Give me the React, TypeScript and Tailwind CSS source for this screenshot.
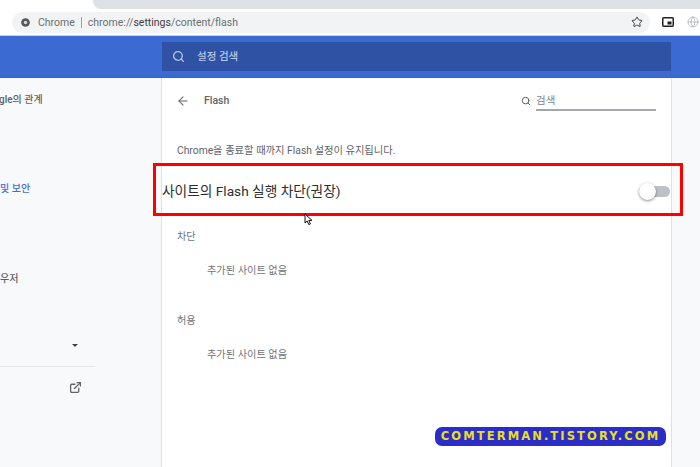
import { ArrowLeft, Search, Star, ExternalLink, Globe } from "lucide-react";

const font = { fontFamily: '"Roboto", "Noto Sans CJK KR", sans-serif' };

const App = () => {
  return (
    <div className="relative w-[700px] h-[467px] overflow-hidden bg-[#f8f9fa] flex flex-col" style={font}>
      {/* Tab strip */}
      <div className="h-[9px] bg-white flex pl-[93px] shrink-0">
        <div className="flex-1 bg-[#dee1e6] rounded-bl-lg" />
      </div>

      {/* Toolbar */}
      <div className="h-[27px] bg-white flex items-center pl-3 shrink-0 border-b border-[#c6d3e8]">
        <div className="flex-1 h-[21px] bg-[#f1f3f4] rounded-full flex items-center pl-[9px] pr-[7px]">
          <svg width="9" height="9" viewBox="0 0 10 10" className="shrink-0">
            <circle cx="5" cy="5" r="4.8" fill="#54575b" />
            <circle cx="5" cy="5" r="1.9" fill="#d5d7da" />
          </svg>
          <span className="ml-[8px] pt-[1px] text-[10.5px] text-[#6b6f73]">Chrome</span>
          <span className="ml-[6px] w-px h-[11px] bg-[#9aa0a6]" />
          <span className="ml-[6px] pt-[1px] text-[10.5px] text-[#6b6f73]">
            chrome://<span className="text-[#3c4043]">settings</span>/content/flash
          </span>
          <Star size={12} strokeWidth={2} className="ml-auto text-[#3c4043]" />
        </div>
        <div className="w-[50px] flex items-center shrink-0 pl-[12px] gap-[13px]">
          <svg width="12" height="10" viewBox="0 0 12 10" className="shrink-0">
            <rect x="0.75" y="0.75" width="10.5" height="8.5" rx="1" fill="none" stroke="#202124" strokeWidth="1.5" />
            <rect x="5.5" y="4.5" width="4" height="3" fill="#202124" />
          </svg>
          <Globe size={12} strokeWidth={1.5} className="text-[#a9adb1]" />
        </div>
      </div>

      {/* Blue header */}
      <div className="h-[42px] bg-[#3b6ad3] flex items-start pt-[6px] pl-[162px] pr-[29px] shrink-0 border-b border-[#2f62d0]">
        <div className="w-full h-[29px] bg-[#2f52a5] flex items-center pl-[10px] text-[#b9c8e8]">
          <Search size={13} strokeWidth={2.4} />
          <span className="ml-[12px] pt-[1px] text-[10.5px] font-medium">설정 검색</span>
        </div>
      </div>

      {/* Body */}
      <div className="flex flex-1 min-h-0">
        {/* Left menu, cut off by the window */}
        <div className="w-[161px] shrink-0 flex flex-col overflow-hidden">
          <div className="w-[95px] flex flex-col text-[10px] text-[#5f6368]">
            <div className="mt-[15px] h-[14px] leading-[14px] font-medium whitespace-nowrap -ml-[1px]">gle의 관계</div>
            <div className="mt-[75px] h-[14px] leading-[14px] font-medium text-[#3f6fd6] whitespace-nowrap">및 보안</div>
            <div className="mt-[76px] h-[14px] leading-[14px] font-medium whitespace-nowrap">우저</div>
            <div className="mt-[52px] h-[14px] flex items-center pl-[72px]">
              <div className="w-0 h-0 border-x-[3px] border-x-transparent border-t-[3px] border-t-[#3c4043]" />
            </div>
            <div className="mt-[14px] h-px bg-[#e8e9eb]" />
            <div className="mt-[14px] pl-[69px]">
              <ExternalLink size={13} strokeWidth={2.4} className="text-[#5f6368]" />
            </div>
          </div>
        </div>

        {/* Settings card */}
        <div className="w-[511px] shrink-0 bg-white border-x border-[#dfe1e5] flex flex-col">
          <div className="h-[42px] pt-[4px] flex items-center pl-[14px] pr-[15px]">
            <ArrowLeft size={14} strokeWidth={1.8} className="text-[#5f6368]" />
            <span className="ml-[14px] text-[10.5px] font-medium text-[#5f6368]">Flash</span>
            <div className="ml-auto flex items-center">
              <Search size={10} strokeWidth={2.4} className="text-[#5f6368]" />
              <div className="ml-[5px] w-[120px] h-[19px] pt-[2px] border-b-2 border-[#a5a7aa] text-[10.5px] leading-[14px] text-[#80868b]">
                검색
              </div>
            </div>
          </div>

          <p className="mt-[23px] pl-[15px] h-[16px] text-[10.3px] leading-[16px] text-[#5f6368]">
            Chrome을 종료할 때까지 Flash 설정이 유지됩니다.
          </p>

          <div className="mt-[10px] h-[44px] flex items-center justify-between pr-[1px]">
            <span className="text-[13.7px] text-[#2b2d30]">사이트의 Flash 실행 차단(권장)</span>
            <div className="relative w-[31px] h-[11px] rounded-full bg-[#bdc1c6] flex items-center">
              <div className="w-[17px] h-[17px] rounded-full bg-white shadow-[0_1px_3px_rgba(0,0,0,0.45)]" />
            </div>
          </div>

          <div className="mt-[17px] pl-[15px] h-[14px] text-[10.2px] leading-[14px] text-[#6f7377]">차단</div>
          <div className="mt-[20px] pl-[45px] h-[14px] text-[10.2px] leading-[14px] text-[#6f7377]">추가된 사이트 없음</div>
          <div className="mt-[36px] pl-[15px] h-[14px] text-[10.2px] leading-[14px] text-[#6f7377]">허용</div>
          <div className="mt-[20px] pl-[45px] h-[14px] text-[10.2px] leading-[14px] text-[#6f7377]">추가된 사이트 없음</div>
        </div>
      </div>

      {/* Red highlight drawn over the screenshot */}
      <div className="absolute left-[153px] top-[163px] w-[530px] h-[53px] border-[3px] border-[#ff0000]" />

      {/* Mouse cursor */}
      <svg className="absolute left-[304px] top-[213px]" width="11" height="13" viewBox="0 0 11 13">
        <path d="M1 1v9l2.2-2 1.6 3.6 1.6-.7L4.8 7.4H8z" fill="#fff" stroke="#111" strokeWidth="1" />
      </svg>

      {/* Watermark */}
      <div className="absolute left-[435px] top-[427px] w-[231px] h-[19px] rounded-[7px] bg-[#2c2cc8] flex items-center justify-center">
        <span
          className="text-[11.5px] font-bold tracking-[2.1px] text-[#e8e020] whitespace-nowrap"
          style={{ fontFamily: '"DejaVu Sans", sans-serif' }}
        >
          COMTERMAN.TISTORY.COM
        </span>
      </div>
    </div>
  );
};

export default App;
